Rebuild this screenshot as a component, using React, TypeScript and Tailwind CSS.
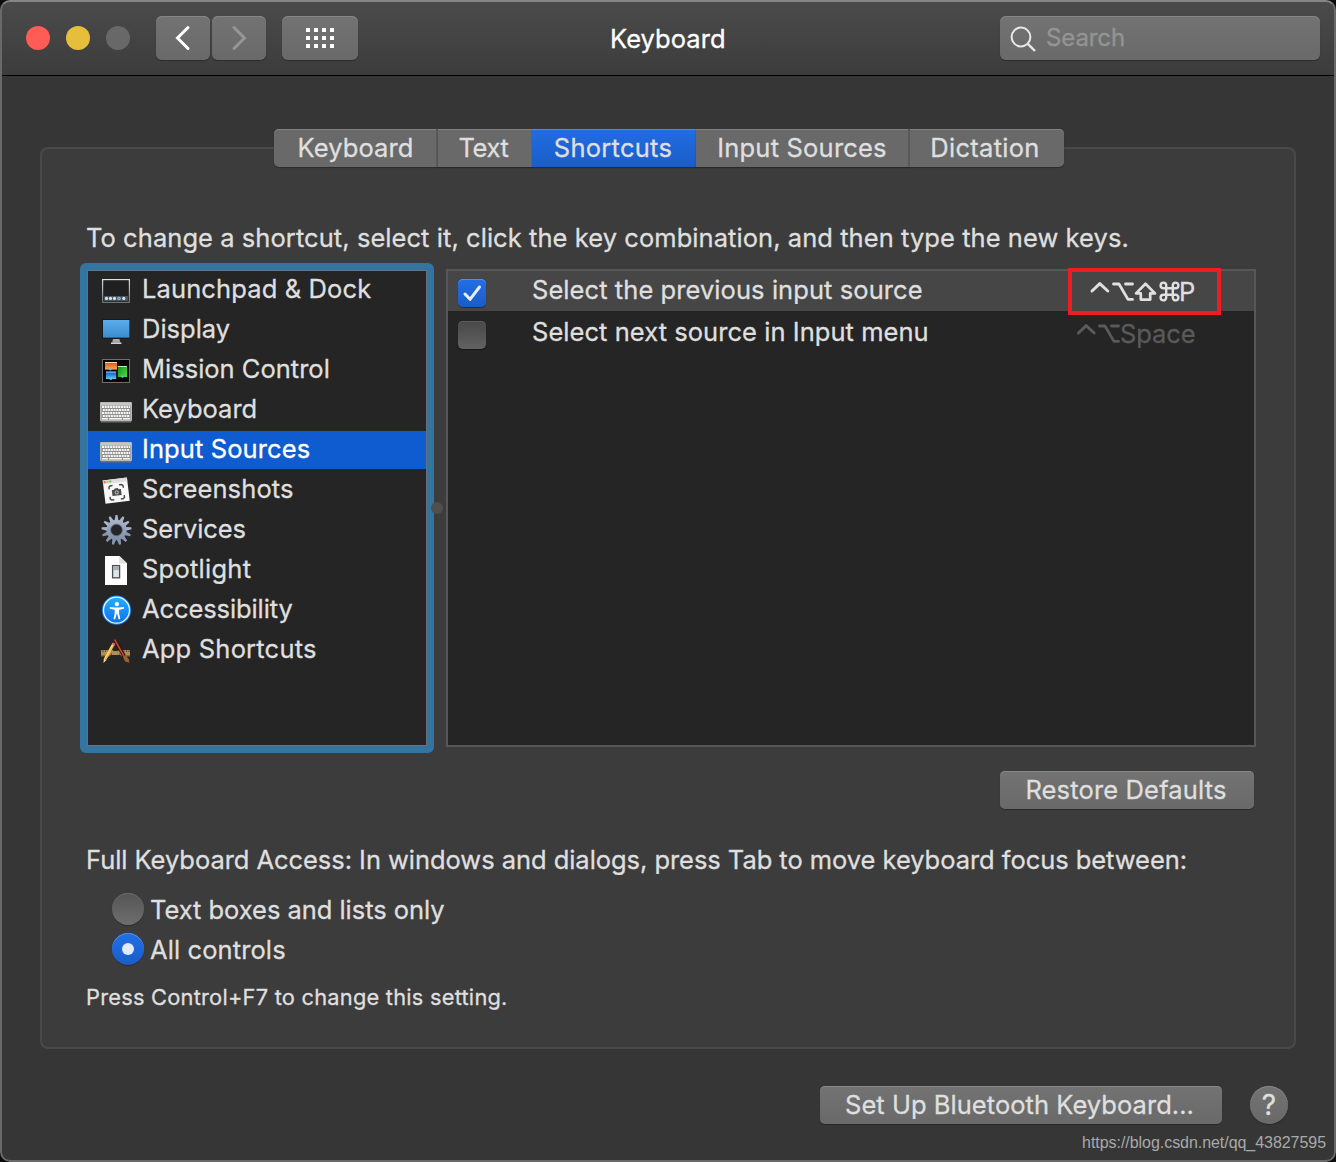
import type { ReactNode } from "react";

const raised =
  "bg-linear-to-b from-[#737373] to-[#696969] shadow-[inset_0_1px_0_#868686,0_1px_1px_rgba(0,0,0,0.3)]";

function KeyboardIcon() {
  const rows = [15.5, 18.5, 21.5, 24.5];
  return (
    <>
      <rect x="0.5" y="12" width="31" height="19.4" rx="1" fill="#6f6f6f" />
      <rect x="0" y="11" width="32" height="19" rx="1" fill="#b9b9b7" />
      <rect x="1" y="12" width="30" height="2.4" fill="#c6c6c4" />
      <rect x="1.5" y="14.8" width="29" height="14" fill="#8f8f8d" />
      {rows.map((y, i) => (
        <line
          key={y}
          x1={2 + (i % 2) * 0.8}
          x2="30"
          y1={y + 0.6}
          y2={y + 0.6}
          stroke="#f6f6f6"
          strokeWidth="2"
          strokeDasharray="2 0.7"
        />
      ))}
      <path d="M2 27.8h6M9 27.8h13M23 27.8h7" stroke="#f6f6f6" strokeWidth="1.6" />
    </>
  );
}

function LaunchpadIcon() {
  return (
    <>
      <defs>
        <linearGradient id="lp" x1="0" y1="0" x2="0" y2="1">
          <stop offset="0" stopColor="#d5e3e6" />
          <stop offset="1" stopColor="#6d7275" />
        </linearGradient>
      </defs>
      <rect x="2.6" y="8.6" width="26.8" height="22.8" fill="#202020" stroke="url(#lp)" strokeWidth="1.2" />
      <rect x="4" y="25" width="24" height="5" fill="#4c5358" />
      {[6.5, 10.5, 14.5, 19, 23.8].map((x) => (
        <circle key={x} cx={x} cy="27.4" r="1.6" fill="#cfe6f7" />
      ))}
      <rect x="17.6" y="26.4" width="2.8" height="2" fill="#4a9ce8" />
    </>
  );
}

function DisplayIcon() {
  return (
    <>
      <defs>
        <linearGradient id="dp" x1="0" y1="0" x2="0" y2="1">
          <stop offset="0" stopColor="#5aaeea" />
          <stop offset="1" stopColor="#3b8bd0" />
        </linearGradient>
      </defs>
      <rect x="2" y="8" width="28" height="20" fill="#1a1a1c" />
      <rect x="3" y="9" width="26.4" height="17.6" fill="url(#dp)" />
      <path d="M13 28h6.4l.8 3.6h-8z" fill="#a9a9a9" />
      <path d="M11 32.2h10.4" stroke="#e8e8e8" strokeWidth="1.4" />
    </>
  );
}

function MissionIcon() {
  return (
    <>
      <defs>
        <linearGradient id="mo" x1="0" y1="0" x2="0" y2="1">
          <stop offset="0" stopColor="#d9511c" />
          <stop offset="1" stopColor="#fba94c" />
        </linearGradient>
        <linearGradient id="mb" x1="0" y1="0" x2="0" y2="1">
          <stop offset="0" stopColor="#1747c9" />
          <stop offset="1" stopColor="#4fd0f0" />
        </linearGradient>
        <linearGradient id="mg" x1="0" y1="0" x2="1" y2="1">
          <stop offset="0" stopColor="#128a17" />
          <stop offset="1" stopColor="#4fe03f" />
        </linearGradient>
      </defs>
      <rect x="2.5" y="8.5" width="27" height="23" fill="#050505" stroke="#6f6f6f" />
      <rect x="5" y="11" width="12" height="7.6" fill="url(#mo)" />
      <path d="M5 11.5h12" stroke="#ffd9b8" />
      <rect x="6" y="20.6" width="10.2" height="7.4" fill="url(#mb)" />
      <path d="M6 21.1h10.2" stroke="#a9c6ff" />
      <rect x="17.8" y="15" width="9.2" height="11" fill="url(#mg)" />
      <path d="M17.8 15.5h9.2" stroke="#b8f3b0" />
      <circle cx="10.8" cy="27.8" r="1.3" fill="#5fc4f5" />
      <circle cx="10.4" cy="18.4" r="1.1" fill="#5fc4f5" />
      <circle cx="22.4" cy="25.6" r="1.2" fill="#55c8f0" />
    </>
  );
}

function ScreenshotIcon() {
  return (
    <g transform="rotate(-7 16.3 19.6)">
      <rect x="4" y="8" width="24.4" height="23.4" fill="#f7f7f7" />
      <rect x="4" y="8" width="24.4" height="3.6" fill="#dcdcdc" />
      <circle cx="5.8" cy="9.8" r="1.1" fill="#f2635c" />
      <circle cx="8.6" cy="9.8" r="1.1" fill="#f0b23c" />
      <circle cx="11.4" cy="9.8" r="1.1" fill="#4cc54b" />
      <path
        d="M9.4 17.6v-2.2l1.2-1.2h2.6M19.8 14.2h2.6l1.2 1.2v2.2M23.6 25v2.2l-1.2 1.2h-2.6M13.2 28.4h-2.6l-1.2-1.2V25"
        fill="none"
        stroke="#4a4a4a"
        strokeWidth="1.5"
      />
      <path d="M11.9 18.6h2.3l.8-1.3h3l.8 1.3h2.3v6h-9.2z" fill="#4b4b4b" />
      <circle cx="16.5" cy="21.5" r="1.6" fill="#4b4b4b" stroke="#dadada" strokeWidth="0.8" />
    </g>
  );
}

function GearIcon() {
  const teeth = Array.from({ length: 13 }, (_, i) => (i * 360) / 13);
  return (
    <>
      <defs>
        <linearGradient id="gr" gradientUnits="userSpaceOnUse" x1="0" y1="4" x2="0" y2="34">
          <stop offset="0" stopColor="#b3bed4" />
          <stop offset="1" stopColor="#76839d" />
        </linearGradient>
      </defs>
      {teeth.map((a) => (
        <path
          key={a}
          d="M15.5 4h2l1.1 6.6h-4.2z"
          fill={a > 90 && a < 270 ? "#8995b0" : "#a9b4cb"}
          transform={`rotate(${a} 16.5 19)`}
        />
      ))}
      <circle cx="16.5" cy="19" r="8" fill="none" stroke="url(#gr)" strokeWidth="4.4" />
      <circle cx="16.5" cy="19" r="5.9" fill="none" stroke="#5f6b86" strokeWidth="0.8" />
    </>
  );
}

function DocumentIcon() {
  return (
    <>
      <path d="M5 5h14.6l7.4 7.2V34H5z" fill="#fcfcfc" />
      <path d="M19.2 5v7.4H27z" fill="#dedede" />
      <rect x="12.6" y="14.6" width="7" height="12.2" fill="#dfe4e6" stroke="#4a4f55" strokeWidth="1.3" />
      <rect x="13.3" y="15.3" width="5.6" height="3.8" fill="#a7adb0" />
    </>
  );
}

function AccessibilityIcon() {
  return (
    <>
      <defs>
        <linearGradient id="ac" x1="0" y1="0" x2="0" y2="1">
          <stop offset="0" stopColor="#22aefc" />
          <stop offset="1" stopColor="#1170f2" />
        </linearGradient>
      </defs>
      <circle cx="16.5" cy="19.2" r="14.6" fill="#1b80ee" />
      <circle cx="16.5" cy="19.2" r="13" fill="url(#ac)" stroke="#e9f5ff" strokeWidth="1.3" />
      <circle cx="16.9" cy="13.2" r="2.1" fill="#fff" />
      <path
        d="M9.8 16l5.2.6h3.8l5.2-.6v1.7l-4.9 1v3.6l1.2 5.7-1.6.4-1.6-5.6h-.4l-1.6 5.6-1.6-.4 1.2-5.7v-3.6l-4.9-1z"
        fill="#fff"
      />
    </>
  );
}

function AppIcon() {
  return (
    <>
      <rect x="1" y="19" width="29" height="6.2" fill="#b08c58" />
      <path d="M2.5 20.2h27" stroke="#5f4522" strokeWidth="1.8" strokeDasharray="1 1.6" />
      <path d="M1 24.8h29" stroke="#7e5f33" />
      <path d="M9 27L15.6 15L22 27z" fill="#252525" />
      <path d="M11.6 22h8" stroke="#b08c58" strokeWidth="4" />
      <path d="M15.2 9.6L24.6 26" stroke="#2b1512" strokeWidth="3.6" />
      <path d="M15 9.2L23.6 24.6" stroke="#c4472f" strokeWidth="1.7" strokeLinecap="round" />
      <path d="M22.8 25.8l2.8-1.8 3.2 4.2.6 3.6-4.2-1.4z" fill="#9b6034" />
      <path d="M13.4 13.2L5.2 28.2" stroke="#f5bd3e" strokeWidth="2.8" />
      <path d="M12.8 13L4.7 27.8" stroke="#fbe08c" strokeWidth="1" />
      <path d="M12.2 12.4l2.6 1.4" stroke="#e06a9a" strokeWidth="2.2" />
      <path d="M3.9 27.4l2.6 1.5-3.1 3.2z" fill="#f2dcb8" />
    </>
  );
}

const categories: { label: string; track: string; icon: ReactNode; selected?: boolean }[] = [
  { label: "Launchpad & Dock", track: "tracking-[0.12px]", icon: <LaunchpadIcon /> },
  { label: "Display", track: "", icon: <DisplayIcon /> },
  { label: "Mission Control", track: "", icon: <MissionIcon /> },
  { label: "Keyboard", track: "", icon: <KeyboardIcon /> },
  { label: "Input Sources", track: "tracking-[0.1px]", icon: <KeyboardIcon />, selected: true },
  { label: "Screenshots", track: "tracking-[0.12px]", icon: <ScreenshotIcon /> },
  { label: "Services", track: "tracking-[-0.1px]", icon: <GearIcon /> },
  { label: "Spotlight", track: "tracking-[0.25px]", icon: <DocumentIcon /> },
  { label: "Accessibility", track: "tracking-[-0.1px]", icon: <AccessibilityIcon /> },
  { label: "App Shortcuts", track: "tracking-[0.2px]", icon: <AppIcon /> },
];

const tabs = [
  { label: "Keyboard", cls: "w-[164px] tracking-[0.1px] rounded-l-[5px] border-r-2 border-[#5a5a5a] pl-px" },
  { label: "Text", cls: "w-[94px] tracking-[-0.35px] pr-[3px]" },
  { label: "Shortcuts", cls: "w-[164px] tracking-[0.25px] pr-[2px]", selected: true },
  { label: "Input Sources", cls: "w-[214px] tracking-[0.2px] border-r-2 border-[#5a5a5a]" },
  { label: "Dictation", cls: "w-[154px] tracking-[0.3px] rounded-r-[5px] pr-[4px]" },
];

export default function App() {
  return (
    <div className="h-[1162px] w-[1336px] overflow-hidden bg-[#0c0c0c] font-['Inter',sans-serif] text-[25.5px] text-[#dfdfdf] [-webkit-text-stroke:0.3px]">
      <div className="relative flex h-full w-full flex-col overflow-hidden rounded-[10px] bg-[#363636]">
        <div className="pointer-events-none absolute inset-0 z-20 rounded-[10px] border-2 border-[#696969] border-t-[#858585]" />

        <header className="flex h-[76px] shrink-0 items-start border-b border-black bg-linear-to-b from-[#4b4b4b] to-[#3c3c3c] pt-4 pl-[26px]">
          <div className="mt-[10px] flex gap-4">
            <span className="size-6 rounded-full bg-[#ff5c56]" />
            <span className="size-6 rounded-full bg-[#e5bf3c]" />
            <span className="size-6 rounded-full bg-[#686868]" />
          </div>
          <div className="ml-[26px] flex gap-[2px]">
            <button className={`${raised} h-11 w-[54px] rounded-[6px]`}>
              <svg width="54" height="44" fill="none" stroke="#fff" strokeWidth="3" strokeLinecap="round">
                <path d="M32 11.5L21.5 22L32 32.5" />
              </svg>
            </button>
            <button className={`${raised} h-11 w-[54px] rounded-[6px]`}>
              <svg width="54" height="44" fill="none" stroke="#969696" strokeWidth="3" strokeLinecap="round">
                <path d="M22 11.5L32.5 22L22 32.5" />
              </svg>
            </button>
          </div>
          <button className={`${raised} ml-4 grid h-11 w-[76px] grid-cols-[repeat(4,4px)] grid-rows-[repeat(3,4px)] content-center justify-center gap-1 rounded-[6px]`}>
            {Array.from({ length: 12 }, (_, i) => (
              <span key={i} className="size-1 bg-white" />
            ))}
          </button>
          <h1 className="ml-[252px] w-[120px] pt-[1px] leading-[44px] font-normal tracking-[0.05px] text-white">Keyboard</h1>
          <div className={`${raised} ml-[270px] flex h-11 w-[320px] rounded-[6px]`}>
            <svg width="46" height="44" fill="none" stroke="#e8e8e8" strokeWidth="2">
              <circle cx="21" cy="21" r="9.4" />
              <path d="M27.8 27.8L35 35" strokeWidth="2.4" />
            </svg>
            <span className="text-[24px] leading-[44px] tracking-[-0.1px] text-[#949494]">Search</span>
          </div>
        </header>

        <main className="flex flex-col pt-[53px]">
          <nav className="z-10 ml-[274px] flex h-[38px]">
            {tabs.map((t) => (
              <button
                key={t.label}
                className={`${t.cls} h-[38px] text-center leading-[38px] ${
                  t.selected
                    ? "bg-linear-to-b from-[#216de2] to-[#1a5dc9] shadow-[inset_0_1px_0_#4c8aec,0_1px_1px_rgba(0,0,0,0.3)]"
                    : "bg-[#696969] shadow-[inset_0_1px_0_#828282,0_1px_1px_rgba(0,0,0,0.3)]"
                }`}
              >
                {t.label}
              </button>
            ))}
          </nav>

          <section className="-mt-5 ml-10 flex h-[902px] w-[1256px] flex-col rounded-[8px] border-2 border-[#494949] bg-[#3c3c3c]">
            <p className="mt-[69px] ml-[44px] h-10 leading-10 tracking-[0.06px] whitespace-nowrap">
              To change a shortcut, select it, click the key combination, and then type the new keys.
            </p>

            <div className="mt-[5px] ml-[38px] flex h-[490px]">
              <ul className="flex h-[490px] w-[354px] flex-col gap-[2px] rounded-[6px] border-[7px] border-[#3474a0] bg-[#252525] pt-[1px] shadow-[inset_0_0_0_1px_#66727a]">
                {categories.map((c) => (
                  <li
                    key={c.label}
                    className={`mx-[1px] flex h-[38px] shrink-0 pl-3 ${c.selected ? "bg-[#0f5bd0] text-white" : ""}`}
                  >
                    <svg width="32" height="38" viewBox="0 0 32 38" className="shrink-0">
                      {c.icon}
                    </svg>
                    <span className={`-mt-[1px] ml-[10px] leading-[38px] whitespace-nowrap ${c.track}`}>{c.label}</span>
                  </li>
                ))}
              </ul>

              <div className="flex w-3 items-center justify-center">
                <span className="mr-[-6px] ml-[-12px] size-3 rounded-full bg-[#4f4f4f]" />
              </div>

              <div className="relative mt-[6px] h-[478px] w-[810px] border-2 border-[#575757] bg-[#252525]">
                <div className="flex h-10 bg-[#464646] pl-[10px]">
                  <span className="mt-2 flex size-7 items-center justify-center rounded-[5px] bg-linear-to-b from-[#226fe6] to-[#1a5cc8] shadow-[inset_0_1px_0_#4e8df0,0_1px_1px_rgba(0,0,0,0.4)]">
                    <svg width="28" height="28" fill="none" stroke="#e6eefb" strokeWidth="3" strokeLinecap="round" strokeLinejoin="round">
                      <path d="M7 15L12 20.3L21.5 8" />
                    </svg>
                  </span>
                  <span className="-mt-[1px] ml-[46px] w-[550px] leading-10 tracking-[0.07px]">Select the previous input source</span>
                  <svg width="98" height="40" fill="none" stroke="#e0e0e0" strokeLinecap="round" strokeLinejoin="round">
                    <path d="M10 20L17.8 12.6L25.8 20" strokeWidth="3" />
                    <path d="M31.5 13H37L46 28.4H50.5M43.5 13H50.5" strokeWidth="2.8" />
                    <path d="M63.5 12.8L54 22.4H58.8V28.6H68.2V22.4H73Z" strokeWidth="2.7" />
                    <path
                      d="M84.2 17.2H90.8V23.8H84.2ZM84.2 17.2H81.2A2.8 2.8 0 1 1 84.2 14.4ZM90.8 17.2V14.4A2.8 2.8 0 1 1 93.6 17.2ZM90.8 23.8H93.6A2.8 2.8 0 1 1 90.8 26.6ZM84.2 23.8V26.6A2.8 2.8 0 1 1 81.4 23.8Z"
                      strokeWidth="2.4"
                    />
                  </svg>
                  <span className="mt-[1px] -ml-[1px] leading-10">P</span>
                </div>
                <div className="flex h-[42px] pl-[10px]">
                  <span className="mt-[10px] size-7 rounded-[5px] bg-linear-to-b from-[#484848] to-[#626262] shadow-[inset_0_1px_0_#5c5c5c,0_1px_1px_rgba(0,0,0,0.4)]" />
                  <span className="mt-[1px] ml-[46px] w-[538px] leading-10 tracking-[0.05px]">Select next source in Input menu</span>
                  <svg width="50" height="42" fill="none" stroke="#5a5a5a" strokeLinecap="round" strokeLinejoin="round">
                    <path d="M8.4 22L16.2 14.6L24.2 22" strokeWidth="3" />
                    <path d="M29.5 15H35L44 30.4H48.5M41.5 15H48.5" strokeWidth="2.8" />
                  </svg>
                  <span className="mt-[3px] leading-10 tracking-[-0.1px] text-[#5a5a5a]">Space</span>
                </div>
                <div className="absolute -top-[3px] left-[620px] h-[47px] w-[153px] border-4 border-[#ee1d24]" />
              </div>
            </div>

            <button className={`${raised} mt-[18px] ml-[958px] h-[38px] w-[254px] shrink-0 rounded-[5px] pr-[2px] leading-[38px] tracking-[0.15px]`}>
              Restore Defaults
            </button>

            <p className="mt-[31px] ml-[44px] h-10 leading-10 tracking-[-0.05px] whitespace-nowrap">
              Full Keyboard Access: In windows and dialogs, press Tab to move keyboard focus between:
            </p>
            <div className="mt-[13px] ml-[70px] flex flex-col gap-2">
              <label className="flex h-8">
                <span className="size-8 rounded-full bg-linear-to-b from-[#555555] to-[#6e6e6e] shadow-[inset_0_1px_0_#6a6a6a,0_1px_1px_rgba(0,0,0,0.3)]" />
                <span className="mt-[1px] ml-[6px] leading-8 tracking-[-0.04px]">Text boxes and lists only</span>
              </label>
              <label className="flex h-8">
                <span className="flex size-8 items-center justify-center rounded-full bg-linear-to-b from-[#226fe6] to-[#1a5cc8] shadow-[inset_0_1px_0_#4e8df0,0_1px_1px_rgba(0,0,0,0.3)]">
                  <span className="size-3 rounded-full bg-[#e0eafa]" />
                </span>
                <span className="mt-[1px] ml-[6px] leading-8 tracking-[0.1px]">All controls</span>
              </label>
            </div>
            <p className="mt-[17px] ml-[44px] h-[30px] text-[21.8px] leading-[30px] tracking-[0.24px] whitespace-nowrap">
              Press Control+F7 to change this setting.
            </p>
          </section>

          <footer className="mt-[37px] flex flex-col">
            <div className="ml-[820px] flex gap-7">
              <button className={`${raised} h-[38px] w-[402px] rounded-[5px] pr-[3px] leading-[38px] tracking-[0.04px]`}>
                Set Up Bluetooth Keyboard...
              </button>
              <button className={`${raised} size-[38px] rounded-full text-[28px] leading-[38px]`}>?</button>
            </div>
            <p className="mt-[9px] mr-[10px] text-right font-['Liberation_Sans',sans-serif] text-[16px] leading-5 tracking-[-0.05px] text-[#a9a9a9] [-webkit-text-stroke:0px]">
              https://blog.csdn.net/qq_43827595
            </p>
          </footer>
        </main>
      </div>
    </div>
  );
}
